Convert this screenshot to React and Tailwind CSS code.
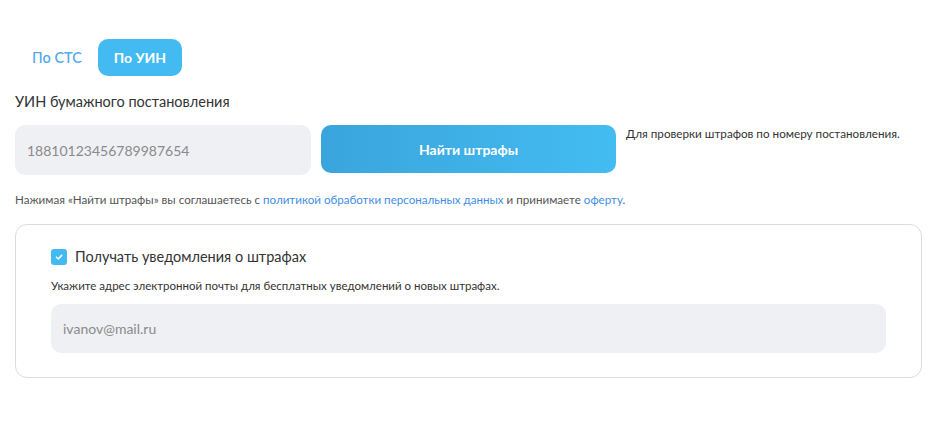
import React from "react";

export default function App() {
  return (
    <div className="w-[931px] h-[426px] bg-white px-[15px] pt-[39px] text-[#333] [font-family:Lato,'Open_Sans',sans-serif]">
      <div className="flex items-center gap-0">
        <button className="h-[37px] pl-[17px] pr-[16px] rounded-[10px] text-[14.5px] font-medium text-[#4fa9ea]">По СТС</button>
        <button className="h-[37px] w-[84px] rounded-[10px] bg-[#43bbf2] text-[14px] font-bold text-white">По УИН</button>
      </div>
      <div className="mt-[16px] text-[14.5px] leading-[20px] text-[#333]">УИН бумажного постановления</div>
      <div className="mt-[13px] flex items-start">
        <div className="w-[296px] h-[50px] rounded-[10px] bg-[#eef0f4] flex items-center pl-[12px] text-[14px] text-[#8a8a8a]">18810123456789987654</div>
        <button className="ml-[10px] w-[295px] h-[48px] rounded-[10px] bg-gradient-to-r from-[#3aa5dc] to-[#43bcf2] text-white text-[14px] font-bold">Найти штрафы</button>
        <div className="ml-[10px] mt-[1px] text-[11.7px] leading-[14px] text-[#333]">Для проверки штрафов по номеру постановления.</div>
      </div>
      <div className="mt-[18px] text-[11.6px] leading-[14px] text-[#555]">
        Нажимая «Найти штрафы» вы соглашаетесь с <span className="text-[#3f8ee6]">политикой обработки персональных данных</span> и принимаете <span className="text-[#3f8ee6]">оферту</span>.
      </div>
      <div className="mt-[17px] w-[907px] h-[154px] rounded-[12px] border border-[#dcdcdc] px-[35px] pt-[22px]">
        <div className="flex items-center gap-[8px]">
          <div className="w-[16px] h-[16px] rounded-[3px] bg-[#43bbf2] flex items-center justify-center">
            <svg width="10" height="10" viewBox="0 0 10 10" fill="none">
              <path d="M2.5 5.2 L4.3 7 L7.6 3.4" stroke="white" strokeWidth="1.6" strokeLinecap="round" strokeLinejoin="round" />
            </svg>
          </div>
          <span className="text-[14.5px] leading-[20px] text-[#333]">Получать уведомления о штрафах</span>
        </div>
        <div className="mt-[12px] text-[11.5px] leading-[14px] text-[#333]">Укажите адрес электронной почты для бесплатных уведомлений о новых штрафах.</div>
        <div className="mt-[11px] w-[835px] h-[49px] rounded-[10px] bg-[#eef0f4] flex items-center pl-[12px] text-[14px] text-[#8a8a8a]">ivanov@mail.ru</div>
      </div>
    </div>
  );
}
